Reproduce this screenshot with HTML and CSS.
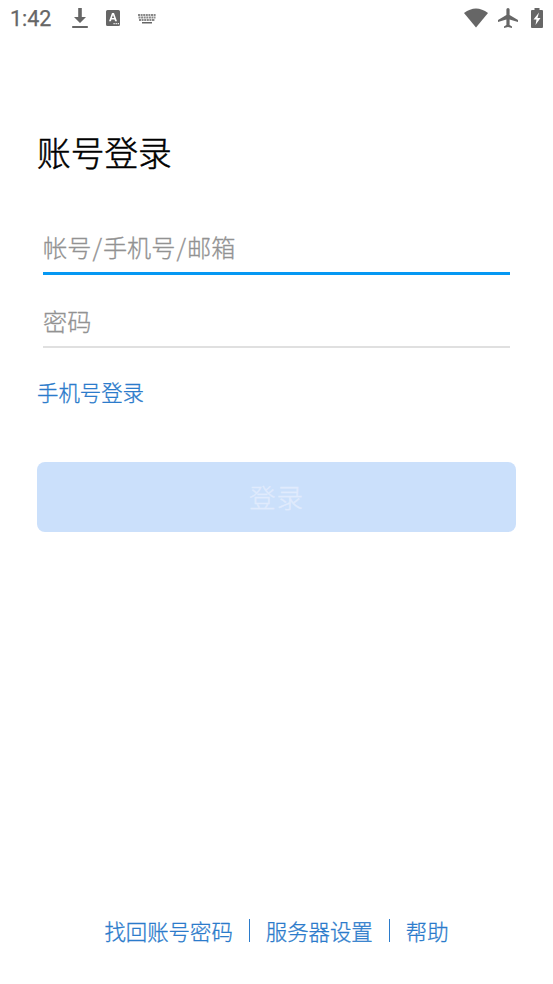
FILE: index.html
```html
<!DOCTYPE html>
<html lang="zh-CN"><head><meta charset="utf-8"><title>账号登录</title><link rel="stylesheet" href="styles.css"></head>
<body>
<header class="status">
<span class="time">1:42</span>
<svg class="download" width="18" height="22" viewBox="0 0 18 22"><path d="M7.200 1h3.600v9H15l-6 6-6-6h4.200zM1.200 19h15.600v2H1.200z"/></svg>
<svg class="app" width="16" height="18" viewBox="0 0 16 18"><path fill-rule="evenodd" d="M2.500 1h11q1.500 0 1.500 1.500v13q0 1.500-1.500 1.500h-11Q1 17 1 15.500v-13Q1 1 2.500 1zM7 4 4 12.300h1.900l.6-1.900h3l.6 1.900H12L9 4zm1 1.900L9.100 9H6.900zM8.500 14v1.200h1.200V14zm2.100 0v1.200h1.200V14zm2.100 0v1.200h1.200V14z"/></svg>
<svg class="keyboard" width="18" height="12" viewBox="0 0 18 12"><path d="M0 2h18M.5 4.500h17M1 7h16" stroke="#888" stroke-width="1.900" stroke-dasharray="2 .6"/><path d="M4 9h10v1.500H4z"/></svg>
<span class="spacer"></span>
<svg class="wifi" width="26" height="20" viewBox="0 0 26 20"><path d="M1 5Q13-4 25 5L13 19.500z"/></svg>
<svg class="plane" width="20" height="20" viewBox="0 0 20 20"><path d="M20 14v-2l-8.400-5V1.500a1.600 1.500 0 0 0-3.200 0V7L0 12v2l8.400-2.600v5.500L6 18.500V20l4-1 4 1v-1.500l-2.400-1.600v-5.500z"/></svg>
<svg class="battery" width="12" height="20" viewBox="0 0 12 20"><path fill-rule="evenodd" d="M3.500 0h5v2H11q1 0 1 1v16q0 1-1 1H1q-1 0-1-1V3q0-1 1-1h2.500zM8 4.500l-5.500 7h3l-1 5.500 5-7h-3z"/></svg>
</header>
<main class="login"><h1>账号登录</h1>
<form><div class="field active">帐号<span class="slash">/</span>手机号<span class="slash">/</span>邮箱</div><div class="field">密码</div><a class="phone">手机号登录</a><button type="button">登录</button></form></main>
<footer><a>找回账号密码</a><i></i><a>服务器设置</a><i></i><a>帮助</a></footer>
</body></html>
```
FILE: styles.css
```css
*{box-sizing:border-box}
body{margin:0;height:984px;display:flex;flex-direction:column;background:#fff;font-family:"Noto Sans CJK SC",sans-serif;font-weight:300;-webkit-text-stroke:.3px currentColor;overflow:hidden}
.status{height:36px;padding:0 10px;display:flex;align-items:center;color:#666;fill:#666}
.status svg{flex:none}
.time{font:400 21.500px/37px Roboto,sans-serif;width:61px;-webkit-text-stroke:.25px #666;padding-top:1px}
.download{margin-right:16px}
.app{margin-right:17px}
.keyboard{margin-top:2px}
.spacer{flex:1}
.wifi{margin-right:9px}
.plane{margin-right:13px}
.login{padding:91px 37px 0}
h1{margin:0;font-size:33.700px;line-height:50px;font-weight:300;color:#000;-webkit-text-stroke:.5px #000}
.field{margin:0 6px;height:73px;border-bottom:2px solid #e0e0e0;color:#929292;font-size:24.200px;line-height:44px;padding-top:24px}
.field.active{height:75px;margin-top:23px;border-bottom:3px solid #0598f3;padding-top:25px}
.slash{padding:0 1px}
.phone{display:block;margin-top:28px;font-size:21.400px;line-height:32px;color:#2b7bcb}
button{display:block;width:479px;height:70px;margin-top:54px;border:0;border-radius:8px;background:#cbe0fb;color:#e0ebfd;font:300 26.500px/70px "Noto Sans CJK SC",sans-serif;padding:0;letter-spacing:1px;-webkit-text-stroke:.35px currentColor}
footer{margin-top:auto;height:74px;display:flex;justify-content:center;align-items:flex-start;color:#2b7bcb;font-size:21.400px;line-height:42px}
footer i{width:1px;height:23px;margin:9px 16px;background:#2b7bcb}
```
